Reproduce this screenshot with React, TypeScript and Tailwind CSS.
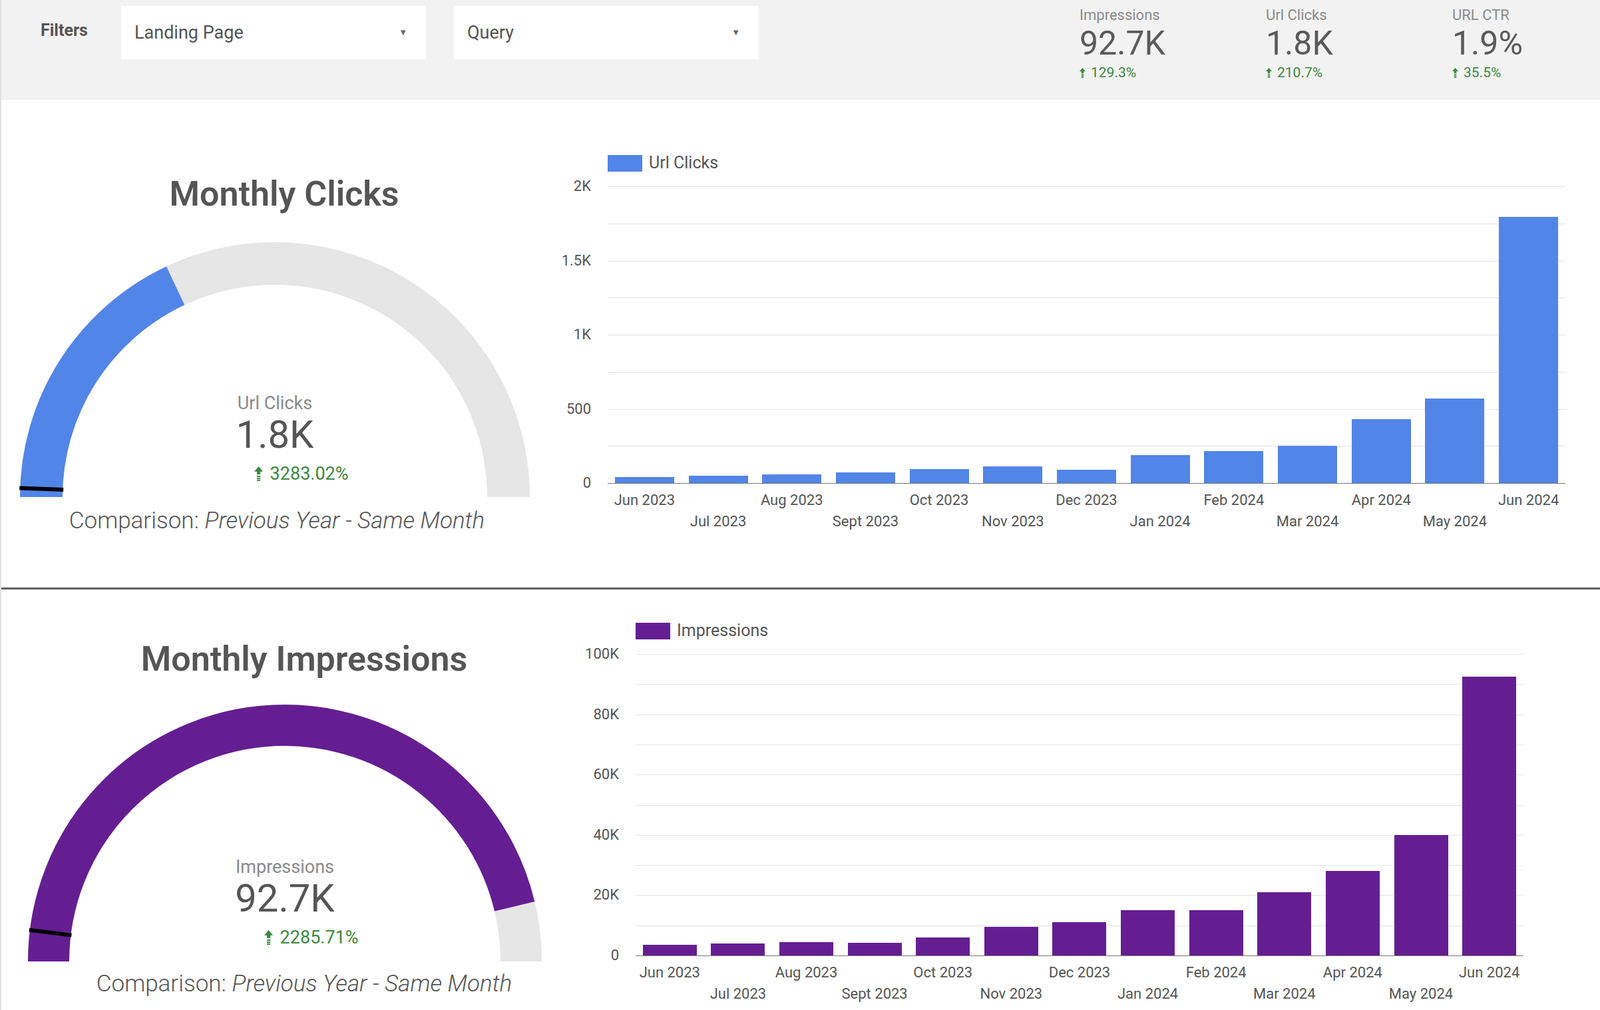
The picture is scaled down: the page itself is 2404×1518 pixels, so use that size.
const months = ["Jun 2023","Jul 2023","Aug 2023","Sept 2023","Oct 2023","Nov 2023","Dec 2023","Jan 2024","Feb 2024","Mar 2024","Apr 2024","May 2024","Jun 2024"];
const clicks = [40,50,60,70,95,110,90,190,215,250,430,570,1795];
const impressions = [3500,4000,4500,4300,6000,9500,11000,15000,15000,21000,28000,40000,92500];

function UpArrow({ size = 14 }: { size?: number }) {
  return (
    <svg width={size * 0.6} height={size} viewBox="0 0 6 10" className="inline-block">
      <path d="M3 0 L6 3.5 L4.2 3.5 L4.2 5.5 L1.8 5.5 L1.8 3.5 L0 3.5 Z" fill="#3b8a3e" />
      <rect x="1.8" y="6.3" width="2.4" height="1" fill="#3b8a3e" />
      <rect x="1.8" y="7.8" width="2.4" height="1" fill="#3b8a3e" />
      <rect x="1.8" y="9.2" width="2.4" height="0.8" fill="#3b8a3e" />
    </svg>
  );
}

function Kpi({ label, value, change, w }: { label: string; value: string; change: string; w: string }) {
  return (
    <div className={`flex flex-col ${w}`}>
      <span className="text-[22px] leading-[28px] text-[#8a8a8a]">{label}</span>
      <span className="text-[50px] leading-[56px] text-[#5a5a5a]">{value}</span>
      <span className="flex items-center gap-[8px] text-[21px] leading-[28px] text-[#3b8a3e] mt-[2px]">
        <UpArrow size={15} /> {change}
      </span>
    </div>
  );
}

function Dropdown({ label }: { label: string }) {
  return (
    <div className="w-[458px] h-[80px] bg-white flex items-start justify-between pt-[24px] pl-[20px] pr-[28px]">
      <span className="text-[27px] leading-[32px] text-[#555]">{label}</span>
      <span className="text-[13px] text-[#666] mt-[6px]">▼</span>
    </div>
  );
}

function Gauge({ w, r, stroke, frac, marker, color, label, value, change, labelTop }: {
  w: number; r: number; stroke: number; frac: number; marker: number; color: string;
  label: string; value: string; change: string; labelTop: number;
}) {
  const cx = w / 2;
  const h = r + stroke / 2;
  const cy = h;
  const d = `M ${cx - r} ${cy} A ${r} ${r} 0 0 1 ${cx + r} ${cy}`;
  const a = (marker * Math.PI) / 180;
  const ri = r - stroke / 2 - 1, ro = r + stroke / 2 + 1;
  return (
    <div className="relative" style={{ width: w, height: h }}>
      <svg width={w} height={h}>
        <path d={d} fill="none" stroke="#e6e6e6" strokeWidth={stroke} />
        <path d={d} fill="none" stroke={color} strokeWidth={stroke} pathLength={100} strokeDasharray={`${frac * 100} 200`} />
        <line x1={cx - ri * Math.cos(a)} y1={cy - ri * Math.sin(a)} x2={cx - ro * Math.cos(a)} y2={cy - ro * Math.sin(a)} stroke="#000" strokeWidth={6} />
      </svg>
      <div className="absolute left-0 right-0 flex flex-col items-center" style={{ top: labelTop }}>
        <span className="text-[27px] leading-[32px] text-[#8a8a8a]">{label}</span>
        <span className="text-[58px] leading-[62px] text-[#555]">{value}</span>
        <span className="flex items-center gap-[10px] text-[27px] leading-[40px] text-[#3b8a3e] mt-[8px] ml-[80px]">
          <UpArrow size={22} /> {change}
        </span>
      </div>
    </div>
  );
}

function BarChart({ values, max, ticks, tickLabels, color, legend, plotW, plotH, barW, labelW }: {
  values: number[]; max: number; ticks: number; tickLabels: Record<number, string>; color: string;
  legend: string; plotW: number; plotH: number; barW: number; labelW: number;
}) {
  const lines = Array.from({ length: ticks + 1 }, (_, i) => i);
  return (
    <div className="flex flex-col">
      <div className="flex items-center gap-[10px]" style={{ marginLeft: labelW + 25 }}>
        <div className="w-[52px] h-[25px]" style={{ background: color }} />
        <span className="text-[25px] leading-[30px] text-[#555]">{legend}</span>
      </div>
      <div className="flex mt-[20px]">
        <div className="relative" style={{ width: labelW, height: plotH }}>
          {lines.map((i) =>
            tickLabels[i] ? (
              <span key={i} className="absolute right-0 text-[22px] leading-[26px] text-[#555] -translate-y-1/2" style={{ top: plotH - (i / ticks) * plotH }}>
                {tickLabels[i]}
              </span>
            ) : null
          )}
        </div>
        <div className="relative ml-[25px]" style={{ width: plotW, height: plotH }}>
          {lines.map((i) => (
            <div key={i} className={`absolute left-0 right-0 h-px ${i === 0 ? "bg-[#777]" : "bg-[#e4e4e4]"}`} style={{ top: plotH - (i / ticks) * plotH }} />
          ))}
          <div className="absolute inset-0 flex items-end">
            {values.map((v, i) => (
              <div key={i} className="flex-1 flex justify-center">
                <div style={{ width: barW, height: (v / max) * plotH, background: color }} />
              </div>
            ))}
          </div>
        </div>
      </div>
      <div className="flex mt-[12px]" style={{ marginLeft: labelW + 25, width: plotW }}>
        {months.map((m, i) => (
          <div key={m} className="flex-1 flex justify-center" style={{ paddingTop: i % 2 ? 32 : 0 }}>
            <span className="text-[22px] leading-[28px] text-[#555] whitespace-nowrap">{m}</span>
          </div>
        ))}
      </div>
    </div>
  );
}

export default function App() {
  return (
    <div className="w-[2404px] h-[1518px] overflow-hidden bg-white font-[Roboto,sans-serif] border-l-2 border-[#e0e0e0]">
      <header className="h-[150px] bg-[#f2f2f2] flex items-start">
        <span className="ml-[59px] mt-[27px] text-[25px] font-bold text-[#555] w-[121px]">Filters</span>
        <div className="mt-[9px] flex gap-[42px]">
          <Dropdown label="Landing Page" />
          <Dropdown label="Query" />
        </div>
        <div className="ml-auto mr-[22px] mt-[9px] flex">
          <Kpi label="Impressions" value="92.7K" change="129.3%" w="w-[280px]" />
          <Kpi label="Url Clicks" value="1.8K" change="210.7%" w="w-[280px]" />
          <Kpi label="URL CTR" value="1.9%" change="35.5%" w="w-[200px]" />
        </div>
      </header>

      <section className="h-[736px] flex border-b-[3px] border-[#5f5f5f]">
        <div className="w-[840px] flex flex-col items-center pt-[110px]">
          <h2 className="font-['Open_Sans',sans-serif] font-semibold text-[52px] leading-[64px] text-[#555] mr-[-10px]">Monthly Clicks</h2>
          <div className="mt-[40px] ml-[-18px]">
            <Gauge w={770} r={351} stroke={64} frac={0.36} marker={2} color="#5285e8" label="Url Clicks" value="1.8K" change="3283.02%" labelTop={226} />
          </div>
          <p className="font-['Open_Sans',sans-serif] font-light text-[35px] leading-[44px] text-[#555] mt-[14px] ml-[-12px]">
            Comparison: <em>Previous Year - Same Month</em>
          </p>
        </div>
        <div className="pt-[80px]">
          <BarChart values={clicks} max={2000} ticks={8} tickLabels={{ 0: "0", 2: "500", 4: "1K", 6: "1.5K", 8: "2K" }} color="#5285e8" legend="Url Clicks" plotW={1439} plotH={446} barW={89} labelW={46} />
        </div>
      </section>

      <section className="flex">
        <div className="w-[880px] flex flex-col items-center pt-[73px]">
          <h2 className="font-['Open_Sans',sans-serif] font-semibold text-[52px] leading-[64px] text-[#555] ml-[30px]">Monthly Impressions</h2>
          <div className="mt-[36px] ml-[-28px]">
            <Gauge w={790} r={355} stroke={62} frac={0.925} marker={7} color="#641e92" label="Impressions" value="92.7K" change="2285.71%" labelTop={228} />
          </div>
          <p className="font-['Open_Sans',sans-serif] font-light text-[35px] leading-[44px] text-[#555] mt-[12px] ml-[30px]">
            Comparison: <em>Previous Year - Same Month</em>
          </p>
        </div>
        <div className="pt-[47px] ml-[-10px]">
          <BarChart values={impressions} max={100000} ticks={10} tickLabels={{ 0: "0", 2: "20K", 4: "40K", 6: "60K", 8: "80K", 10: "100K" }} color="#641e92" legend="Impressions" plotW={1334} plotH={453} barW={81} labelW={58} />
        </div>
      </section>
    </div>
  );
}
